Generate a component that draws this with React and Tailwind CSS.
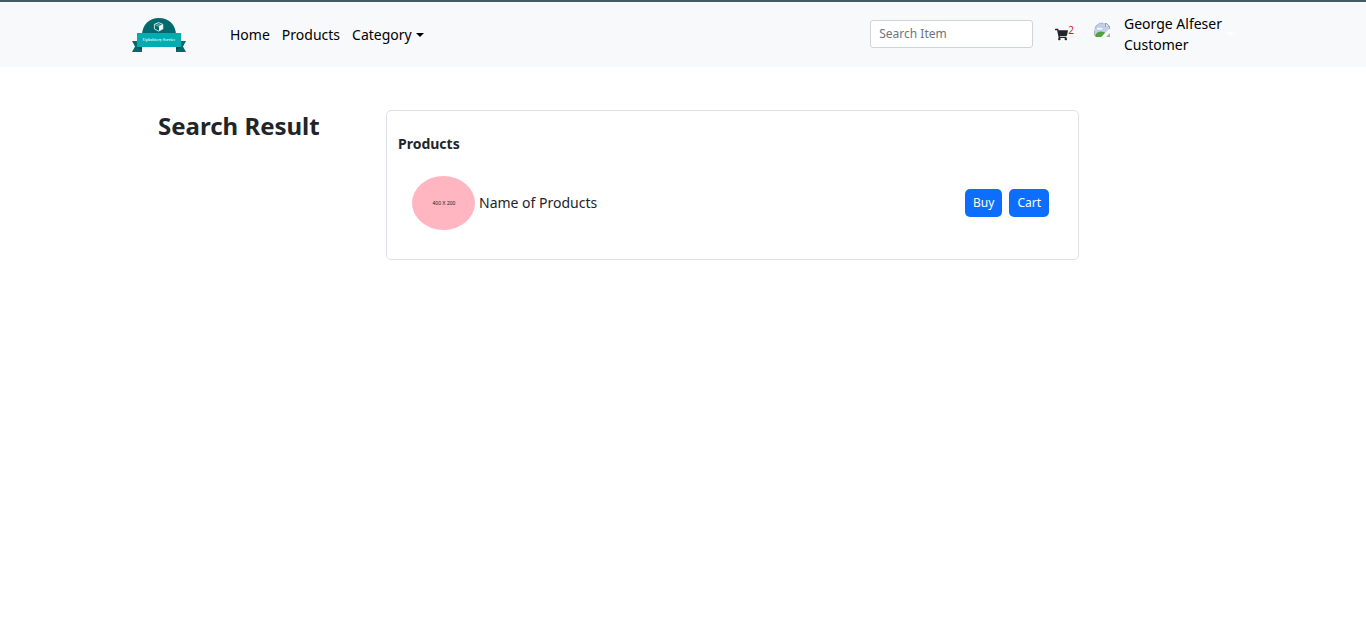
import React from "react";
import { FaShoppingCart } from "react-icons/fa";

function Logo() {
  return (
    <svg viewBox="0 0 54 34" className="h-[34px] w-[54px]" role="img" aria-label="Upholstery Service">
      <path d="M0 23h10v11H0l3-5.500z" fill="#03696d" />
      <path d="M54 23H44v11h10l-3-5.500z" fill="#03696d" />
      <path d="M10 17C10 7 17 0 27 0s17 7 17 17z" fill="#03696d" />
      <path d="M5 29h5v3zM49 29h-5v3z" fill="#024b50" />
      <path d="M5 15h44v14H5z" fill="#04abb0" />
      <path d="M26.500 4.600l4.300 1.700v4.600l-4.300 2.200-4.100-2.200V6.300z" fill="none" stroke="#d9eeee" strokeWidth="0.9" />
      <path d="M27 8.300l3.800-1.700v4.300L27 12.900z" fill="#fff" />
      <path d="M22.400 6.300L26.700 8.300l4.100-2M24.500 5.500l4.200 1.900" fill="none" stroke="#d9eeee" strokeWidth="0.6" />
      <text x="27" y="23.200" textAnchor="middle" fontSize="4" fontWeight="700" fill="#d0f5f5" fontFamily="Liberation Serif, serif">
        Upholstery Service
      </text>
    </svg>
  );
}

function BrokenAvatar() {
  return (
    <svg viewBox="0 0 24 16" className="h-4 w-6" aria-hidden="true">
      <path d="M0 9a9 8 0 0 1 9-8h3l4 4v3l-8 7H2z" fill="#c0cfec" />
      <path d="M11 1v4h5V4.500L12.500 1z" fill="#9aa0a6" />
      <path d="M12 2v2.500h3z" fill="#f5f7fa" />
      <path d="M3 7.500c0-2 2-3 3-1 2-1 3 0 2 1z" fill="#fff" />
      <path d="M1 14c1-4 5-5.500 9-4l1.500 1L8 15H2z" fill="#4da43c" />
      <path d="M12 15l4-4v4z" fill="#8fbf86" />
      <path d="M0.500 9v4.500M9 1.200H6.500C4 2 2 3.500 1.200 6M15.600 5v3" fill="none" stroke="#a0a4ac" strokeWidth="0.8" />
      <path d="M8 15.500L16 7.500" stroke="#fff" strokeWidth="1.800" />
    </svg>
  );
}

function Caret({ className }) {
  return (
    <svg viewBox="0 0 8 4" className={className} aria-hidden="true">
      <path d="M0 0h8L4 4z" fill="currentColor" />
    </svg>
  );
}

function Navbar() {
  return (
    <header className="border-t-2 border-[#455a64] bg-[#f8f9fa]">
      <div className="mx-auto flex h-[65px] max-w-[1102px] items-center">
        <a href="#" className="mr-11">
          <Logo />
        </a>
        <nav className="flex items-center gap-3 text-black">
          <a href="#">Home</a>
          <a href="#">Products</a>
          <button type="button" className="flex items-center gap-1">
            Category
            <Caret className="h-1 w-2" />
          </button>
        </nav>
        <input
          type="search"
          aria-label="Search Item"
          placeholder="Search Item"
          className="mb-0.5 ml-auto h-7 w-[163px] rounded-[3px] border border-[#ced4da] bg-white px-2 text-xs placeholder:text-[#6c757d]"
        />
        <a href="#" aria-label="Cart, 2 items" className="ml-[22px] flex items-center">
          <FaShoppingCart className="size-[13px]" />
          <span className="mb-2.5 text-[10px] leading-3 text-[#e8112d]">2</span>
        </a>
        <button type="button" className="mb-0.5 ml-5 flex items-center text-left text-black">
          <span className="mb-2">
            <BrokenAvatar />
          </span>
          <span className="ml-[6px] leading-[21px]">
            George Alfeser
            <br />
            Customer
          </span>
          <Caret className="ml-1 h-1 w-2 text-white" />
        </button>
      </div>
    </header>
  );
}

function ProductRow() {
  return (
    <div className="mt-[22px] flex items-center pr-[18px] pl-[14px]">
      <div className="flex h-[54px] w-[63px] items-center justify-center rounded-[50%] bg-[#ffb6c1]">
        <svg viewBox="0 0 28 8" className="h-2 w-7" role="img" aria-label="400 X 200">
          <text x="14" y="6" textAnchor="middle" fontSize="5" fill="#222" fontFamily="Liberation Sans Narrow, Liberation Sans, sans-serif">
            400 X 200
          </text>
        </svg>
      </div>
      <span className="mb-0.5 ml-1">Name of Products</span>
      <div className="ml-auto flex gap-[7px]">
        <button type="button" className="h-7 rounded-[5px] bg-[#0d6efd] px-2 text-xs text-white">
          Buy
        </button>
        <button type="button" className="h-7 rounded-[5px] bg-[#0d6efd] px-2 text-xs text-white">
          Cart
        </button>
      </div>
    </div>
  );
}

export default function App() {
  return (
    <div className="min-h-screen bg-white font-['Noto_Sans','Open_Sans',sans-serif] text-sm leading-[21px] text-[#212529]">
      <Navbar />
      <main className="mx-auto flex max-w-[1104px] pt-[43px] pr-[156px] pl-[27px]">
        <h1 className="w-[228px] shrink-0 text-2xl font-bold">Search Result</h1>
        <section className="flex-1 rounded-[5px] border border-[#dee2e6] px-[11px] pt-[22px] pb-[29px]">
          <h2 className="font-bold">Products</h2>
          <ProductRow />
        </section>
      </main>
    </div>
  );
}
